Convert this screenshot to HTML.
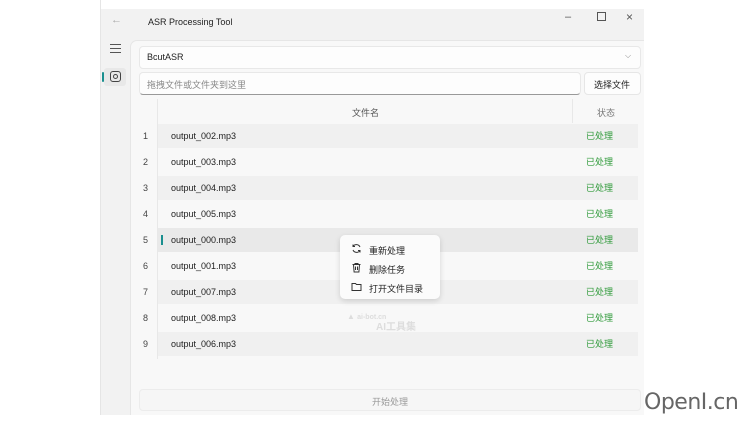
<!DOCTYPE html><html><head><meta charset="utf-8"><style>
*{margin:0;padding:0;box-sizing:border-box}
body{width:750px;height:421px;background:#fff;font-family:"Liberation Sans","Noto Sans CJK SC",sans-serif;font-size:9px;color:#222;position:relative;overflow:hidden}
.a{position:absolute}
.win{left:101px;top:9px;width:543px;height:406px;background:#f2f2f2}
.content{left:130px;top:40px;width:514px;height:375px;background:#f8f8f8;border-top-left-radius:7px;border-left:1px solid #e6e6e6;border-top:1px solid #e6e6e6}
.row{position:absolute;left:158px;width:480px;height:24px}
.g{background:#f0f0f0}
.idx{position:absolute;left:143px;color:#444}
.fn{position:absolute;left:171px;color:#222}
.st{position:absolute;left:586px;color:#2f9a3a;margin-top:-2px}
.menu{left:340px;top:235px;width:100px;height:64px;background:#fbfbfb;border-radius:5px;box-shadow:0 2px 6px rgba(0,0,0,.15)}
</style></head><body>
<div class="a" style="left:100px;top:0;width:1px;height:415px;background:#e5e5e5"></div>
<div class="a win"></div>
<div class="a" style="left:111px;top:14px;color:#aaa;font-size:11px">←</div>
<div class="a" style="left:148px;top:17px;font-size:9px">ASR Processing Tool</div>
<div class="a" style="left:565px;top:11px;color:#555;font-size:11px">–</div>
<div class="a" style="left:597px;top:12px;width:9px;height:9px;border:1px solid #555"></div>
<div class="a" style="left:626px;top:10px;color:#555;font-size:12px">×</div>
<div class="a" style="left:110px;top:44px;width:11px;height:9px;border-top:1px solid #555;border-bottom:1px solid #555"></div>
<div class="a" style="left:110px;top:48px;width:11px;height:1px;background:#555"></div>
<div class="a" style="left:104px;top:68px;width:22px;height:18px;background:#e8e8e8;border-radius:3px"></div>
<div class="a" style="left:102px;top:72px;width:2px;height:10px;background:#1a8f8f;border-radius:1px"></div>
<div class="a" style="left:110px;top:71px;width:11px;height:11px;border:1.3px solid #444;border-radius:3px"></div>
<div class="a" style="left:113px;top:74px;width:5px;height:5px;border:1.2px solid #444;border-radius:50%"></div>
<div class="a content"></div>
<div class="a" style="left:139px;top:46px;width:502px;height:23px;background:#fdfdfd;border:1px solid #e8e8e8;border-radius:4px"></div>
<div class="a" style="left:147px;top:52px">BcutASR</div>
<div class="a" style="left:625px;top:51px;color:#888;font-size:8px">⌵</div>
<div class="a" style="left:139px;top:72px;width:442px;height:23px;background:#fdfdfd;border:1px solid #e8e8e8;border-bottom:1px solid #999;border-radius:4px"></div>
<div class="a" style="left:147px;top:78px;color:#888">拖拽文件或文件夹到这里</div>
<div class="a" style="left:584px;top:72px;width:57px;height:23px;background:#fdfdfd;border:1px solid #e6e6e6;border-radius:4px"></div>
<div class="a" style="left:594px;top:78px">选择文件</div>
<div class="a" style="left:157px;top:99px;width:1px;height:260px;background:#e8e8e8"></div>
<div class="a" style="left:572px;top:99px;width:1px;height:24px;background:#e8e8e8"></div>
<div class="a" style="left:352px;top:106px;color:#555">文件名</div>
<div class="a" style="left:597px;top:106px;color:#777">状态</div>
<div class="row g" style="top:124px"></div>
<div class="row g" style="top:176px"></div>
<div class="row" style="top:228px;background:#e9e9e9"></div>
<div class="row g" style="top:280px"></div>
<div class="row g" style="top:332px"></div>
<div class="a" style="left:161px;top:235px;width:2px;height:10px;background:#1a8f8f"></div>
<div class="idx" style="top:131px">1</div><div class="fn" style="top:131px">output_002.mp3</div><div class="st" style="top:131px">已处理</div>
<div class="idx" style="top:157px">2</div><div class="fn" style="top:157px">output_003.mp3</div><div class="st" style="top:157px">已处理</div>
<div class="idx" style="top:183px">3</div><div class="fn" style="top:183px">output_004.mp3</div><div class="st" style="top:183px">已处理</div>
<div class="idx" style="top:209px">4</div><div class="fn" style="top:209px">output_005.mp3</div><div class="st" style="top:209px">已处理</div>
<div class="idx" style="top:235px">5</div><div class="fn" style="top:235px">output_000.mp3</div><div class="st" style="top:235px">已处理</div>
<div class="idx" style="top:261px">6</div><div class="fn" style="top:261px">output_001.mp3</div><div class="st" style="top:261px">已处理</div>
<div class="idx" style="top:287px">7</div><div class="fn" style="top:287px">output_007.mp3</div><div class="st" style="top:287px">已处理</div>
<div class="idx" style="top:313px">8</div><div class="fn" style="top:313px">output_008.mp3</div><div class="st" style="top:313px">已处理</div>
<div class="idx" style="top:339px">9</div><div class="fn" style="top:339px">output_006.mp3</div><div class="st" style="top:339px">已处理</div>
<div class="a" style="left:347px;top:312px;color:#ddd;font-size:8px;font-weight:bold">▲ <span style="font-size:7px">ai-bot.cn</span></div>
<div class="a" style="left:376px;top:318px;color:#ddd;font-size:10px;font-weight:bold">AI工具集</div>
<div class="a menu"></div>
<svg class="a" style="left:351px;top:243px" width="11" height="11" viewBox="0 0 11 11" fill="none" stroke="#333" stroke-width="1"><path d="M9 4A4 4 0 0 0 2 3.5M2 1.5v2h2M2 7a4 4 0 0 0 7 .5M9 9.5v-2H7"/></svg>
<div class="a" style="left:369px;top:244px">重新处理</div>
<svg class="a" style="left:351px;top:262px" width="11" height="11" viewBox="0 0 11 11" fill="none" stroke="#333" stroke-width="1"><path d="M1.5 2.5h8M4 2.5V1.5h3v1M2.5 2.5l.6 7.5h4.8l.6-7.5M4.5 4.5v3.5M6.5 4.5v3.5"/></svg>
<div class="a" style="left:369px;top:263px">删除任务</div>
<svg class="a" style="left:351px;top:281px" width="11" height="11" viewBox="0 0 11 11" fill="none" stroke="#333" stroke-width="1"><path d="M1 2.5h3.5l1 1H10v6H1z"/></svg>
<div class="a" style="left:369px;top:282px">打开文件目录</div>
<div class="a" style="left:139px;top:389px;width:502px;height:22px;background:#f6f6f6;border:1px solid #ececec;border-radius:4px"></div>
<div class="a" style="left:372px;top:395px;color:#999">开始处理</div>
<div class="a" style="left:644px;top:390px;font-size:22px;color:#666;font-family:'DejaVu Sans',sans-serif;letter-spacing:-0.5px">OpenI.cn</div>
</body></html>
